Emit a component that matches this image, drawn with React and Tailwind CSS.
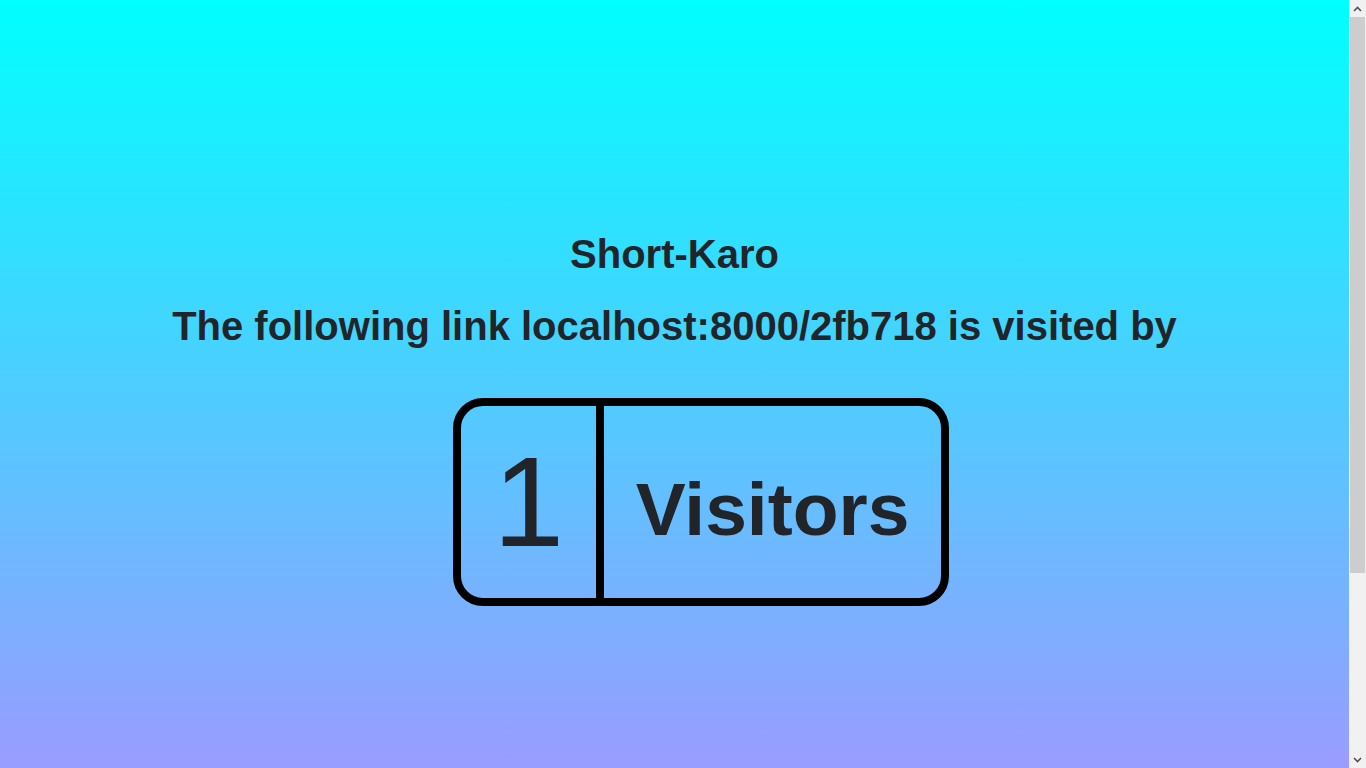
import React from 'react';

function Arrow({ up }) {
  return (
    <div className="flex h-[17px] items-center justify-center">
      <svg width="9" height="6" viewBox="0 0 9 6" className={up ? '' : 'rotate-180'}>
        <polyline points="1,5 4.5,1.5 8,5" fill="none" stroke="#505050" strokeWidth="1.6" />
      </svg>
    </div>
  );
}

function ScrollTrack() {
  return (
    <div className="flex w-[17px] flex-col bg-[#f1f1f1]">
      <Arrow up />
      <div className="mx-[1px] h-[556px] bg-[#cdcdcd]" />
      <div className="flex-1" />
      <Arrow />
    </div>
  );
}

export default function App() {
  const link = 'localhost:8000/2fb718';
  const visitors = 1;

  return (
    <div className="flex h-screen overflow-hidden">
      <div className="flex-1 overflow-hidden">
        <div className="min-h-[1014px] bg-[linear-gradient(#00ffff,#cb7cff)] text-[#212529] font-['Liberation_Sans',Arial,sans-serif] pt-[230px]">
          {/* Heading */}
          <h1 className="text-center text-[40px] leading-[48px] font-bold">Short-Karo</h1>
          <h1 className="mt-[24px] text-center text-[40px] leading-[48px] font-bold">
            The following link {link} is visited by
          </h1>

          {/* Counter box */}
          <div className="mt-[48px] flex justify-center">
            <div className="ml-[53px] flex h-[208px] w-[496px] rounded-[30px] border-8 border-black">
              <div className="flex w-[135px] items-center justify-center">
                <span className="text-[128px] leading-[1.2]">{visitors}</span>
              </div>
              <div className="w-[8px] bg-black" />
              <div className="flex flex-1 items-center justify-center pt-[14px]">
                <span className="text-[75px] leading-[1.2] font-bold">Visitors</span>
              </div>
            </div>
          </div>
        </div>
      </div>
      <ScrollTrack />
    </div>
  );
}
